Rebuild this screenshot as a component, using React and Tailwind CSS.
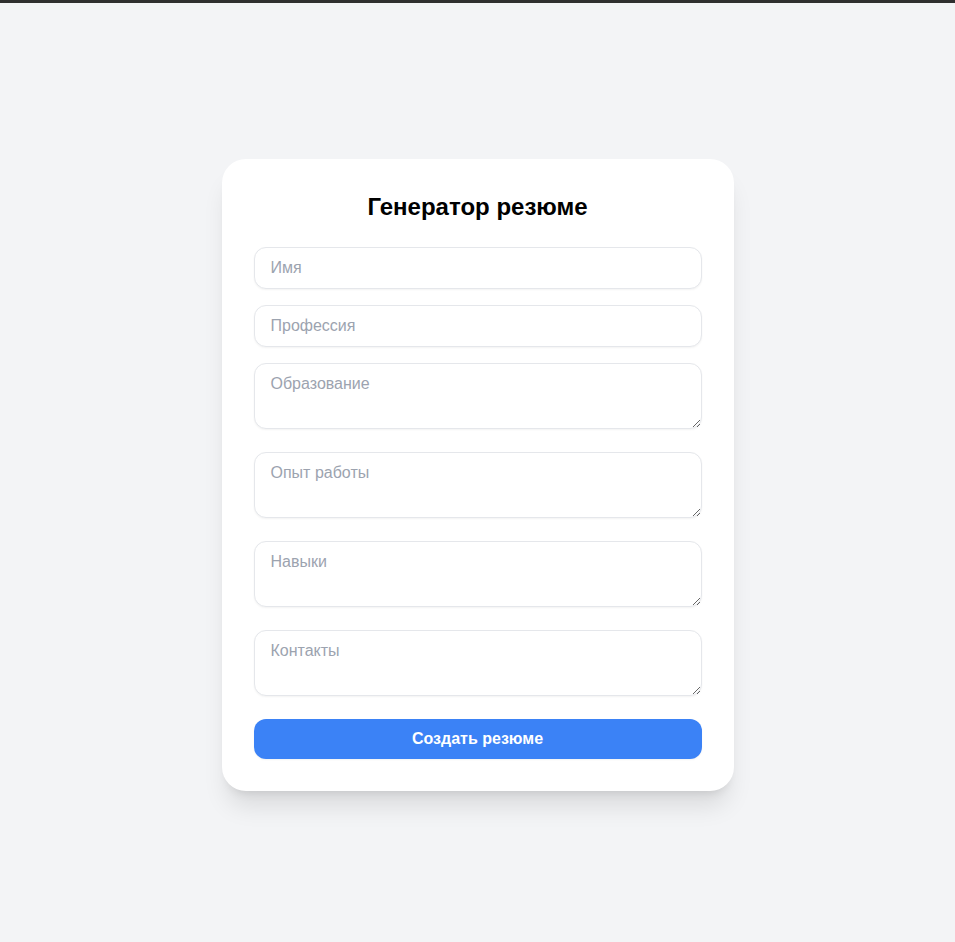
import { useState } from 'react';

const fields = [
  { name: 'name', label: 'Имя', multiline: false },
  { name: 'profession', label: 'Профессия', multiline: false },
  { name: 'education', label: 'Образование', multiline: true },
  { name: 'experience', label: 'Опыт работы', multiline: true },
  { name: 'skills', label: 'Навыки', multiline: true },
  { name: 'contacts', label: 'Контакты', multiline: true },
];

const inputClass =
  'block w-full rounded-xl border border-[#e5e7eb] bg-white px-4 py-2 text-base leading-6 text-gray-900 placeholder-[#9ca3af] shadow-[0_1px_2px_rgba(0,0,0,0.05)] outline-none focus:border-blue-400';

const App = () => {
  const [form, setForm] = useState({});

  const handleChange = (e) => {
    setForm({ ...form, [e.target.name]: e.target.value });
  };

  return (
    <div
      className="min-h-screen border-t-[3px] border-[#2f2f2f] bg-[#f3f4f6] pt-[156px]"
      style={{ fontFamily: '"Liberation Sans", Arial, sans-serif' }}
    >
      <div className="mx-auto w-[512px] rounded-3xl bg-white p-8 shadow-[0_20px_25px_-5px_rgba(0,0,0,0.1),0_8px_10px_-6px_rgba(0,0,0,0.1)]">
        <h1 className="mb-6 text-center text-2xl font-bold text-black">Генератор резюме</h1>

        <form className="flex flex-col gap-4" onSubmit={(e) => e.preventDefault()}>
          {fields.map((f) =>
            f.multiline ? (
              <textarea
                key={f.name}
                name={f.name}
                rows={2}
                placeholder={f.label}
                value={form[f.name] || ''}
                onChange={handleChange}
                className={`${inputClass} mb-[7px] h-[66px]`}
              />
            ) : (
              <input
                key={f.name}
                name={f.name}
                type="text"
                placeholder={f.label}
                value={form[f.name] || ''}
                onChange={handleChange}
                className={inputClass}
              />
            )
          )}

          <button
            type="submit"
            className="w-full rounded-xl bg-[#3b82f6] py-2 text-base font-bold leading-6 text-white shadow-[0_1px_2px_rgba(0,0,0,0.05)] hover:bg-[#2563eb]"
          >
            Создать резюме
          </button>
        </form>
      </div>
    </div>
  );
};

export default App;
